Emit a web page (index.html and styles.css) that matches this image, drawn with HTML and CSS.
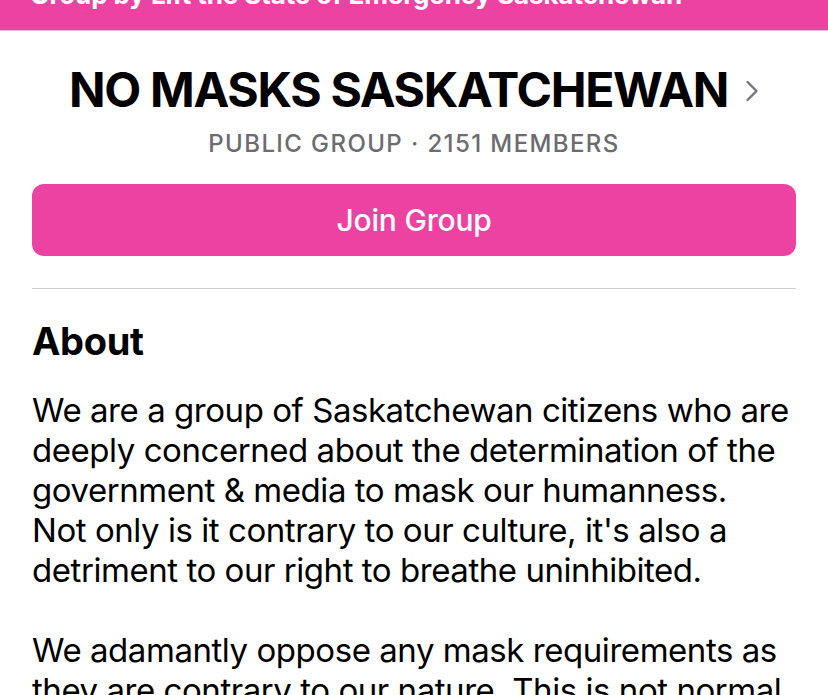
FILE: index.html
```html
<!DOCTYPE html>
<html>
<head>
<meta charset="utf-8">
<link rel="stylesheet" href="styles.css">
</head>
<body>
<div class="topbar"><span class="topbar-text">Group by Lift the State of Emergency Saskatchewan</span></div>
<main class="page">
  <header class="group-head">
    <h1 class="title"><span>NO MASKS SASKATCHEWAN</span><svg class="chev" width="14" height="22" viewBox="0 0 14 22"><path d="M2.5 2 L11.5 11 L2.5 20" fill="none" stroke="#76767a" stroke-width="2.4" stroke-linecap="round" stroke-linejoin="round"/></svg></h1>
    <div class="meta">PUBLIC GROUP · 2151 MEMBERS</div>
  </header>
  <button class="join">Join Group</button>
  <hr class="divider">
  <section class="about">
    <h2 class="about-title">About</h2>
    <p class="about-text">We are a group of Saskatchewan citizens who are<br>deeply concerned about the determination of the<br>government &amp; media to mask our humanness.<br>Not only is it contrary to our culture, it's also a<br>detriment to our right to breathe uninhibited.</p>
    <p class="about-text">We adamantly oppose any mask requirements as<br>they are contrary to our nature. This is not normal</p>
  </section>
</main>
</body>
</html>
```
FILE: styles.css
```css
html, body {
  margin: 0;
  padding: 0;
  background: #fff;
  overflow: hidden;
}
body {
  font-family: Inter, "Liberation Sans", sans-serif;
  color: #000;
  width: 828px;
  height: 695px;
}
.topbar {
  background: #ec43a3;
  height: 31px;
  overflow: hidden;
  border-bottom: 1px solid #f3b6d8;
  box-sizing: border-box;
}
.topbar-text {
  display: block;
  color: #fff;
  font-weight: 700;
  font-size: 26px;
  line-height: 26px;
  margin-top: -18px;
  padding-left: 30px;
  letter-spacing: -0.1px;
}
.page {
  padding: 0 32px;
}
.group-head {
  text-align: center;
  padding-top: 30px;
}
.title {
  margin: 0;
  display: flex;
  justify-content: center;
  align-items: center;
  gap: 17px;
  font-size: 48px;
  font-weight: 700;
  line-height: 58px;
  letter-spacing: -1.3px;
}
.chev {
  flex: none;
  margin-top: 2px;
}
.meta {
  margin-top: 10px;
  font-size: 24px;
  font-weight: 500;
  color: #6b6b70;
  letter-spacing: 1.4px;
}
.join {
  display: block;
  width: 100%;
  height: 72px;
  margin-top: 26px;
  border: none;
  border-radius: 12px;
  background: #ec43a3;
  color: #fff;
  font-family: Inter, "Liberation Sans", sans-serif;
  font-size: 30px;
  font-weight: 500;
  letter-spacing: -0.2px;
}
.divider {
  border: none;
  border-top: 1.5px solid #cfcfd2;
  margin: 32px 0 0;
}
.about-title {
  margin: 29px 0 0;
  font-size: 38px;
  font-weight: 700;
  line-height: 46px;
  letter-spacing: -0.3px;
}
.about-text {
  margin: 26px 0 0;
  font-size: 33px;
  line-height: 40px;
  letter-spacing: -0.45px;
}
.about-text + .about-text {
  margin-top: 40px;
}
```
